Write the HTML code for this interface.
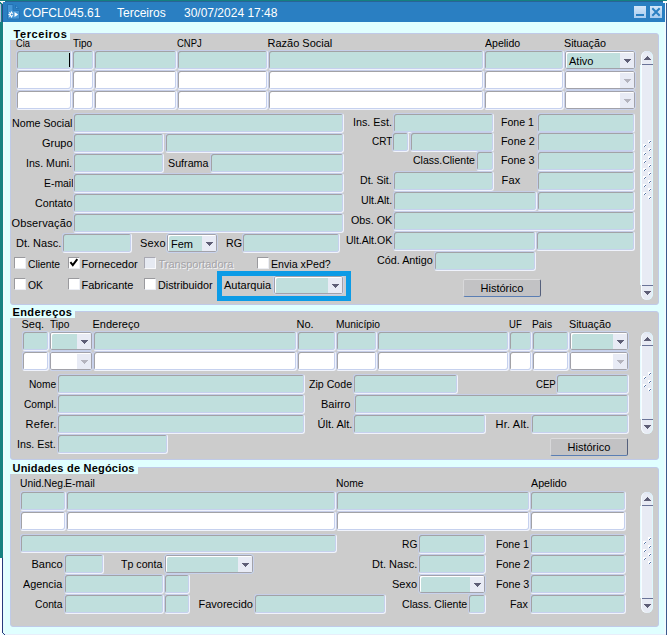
<!DOCTYPE html>
<html><head><meta charset="utf-8"><title>COFCL045.61</title>
<style>
html,body{margin:0;padding:0;}
body{width:667px;height:635px;position:relative;overflow:hidden;background:#e0ffff;font-family:"Liberation Sans",sans-serif;font-size:11px;color:#000;}
div,span{box-sizing:border-box;}
.tt{position:absolute;top:6px;color:#fff;font-size:12px;white-space:pre;line-height:14px;}
.p{position:absolute;background:#cccccc;border-radius:3px;border:1px solid #c0cae8;}
.pt{position:absolute;background:#e0ffff;height:12px;}
.l{position:absolute;transform-origin:0 0;white-space:pre;line-height:14px;font-size:11px;}
.l.bt{font-weight:bold;line-height:13px;}
.l.dis{color:#a4a4a8;text-shadow:1px 1px 0 #f4f4f8;}
.f{position:absolute;height:20px;background:#c0dfdd;border:1px solid;border-color:#c6cee8 #f0f3fc #f0f3fc #c6cee8;border-radius:3px;box-shadow:inset 1px 1px 0 #a2a2a6, inset -1px -1px 0 #c6d1ee;}
.f.w{background:#fff;}
.c{position:absolute;height:20px;background:#c0dfdd;border:1px solid #c8d2ec;border-radius:3px;box-shadow:inset 0 0 0 1px #a2a2aa, inset 2px 2px 0 #fff;}
.c.w{background:#fff;}
.c .ct{position:absolute;left:4px;top:3px;line-height:14px;font-size:11px;}
.c .cb{position:absolute;right:1px;top:2px;bottom:1px;width:14px;background:#e8ebf5;}
.c .cb svg{position:absolute;left:4px;top:6px;fill:#5e5e76;}
.c.dis .cb svg{fill:#b4b4be;}
.cur{position:absolute;width:1px;background:#000;}
.k{position:absolute;width:12px;height:12px;background:#fff;border:1px solid;border-color:#9a9a9e #eceef4 #eceef4 #9a9a9e;border-radius:1px;}
.k svg{position:absolute;left:-1px;top:-1px;}
.k.kd{background:#e6eaf2;border-color:#a8a8b2 #fafafc #fafafc #a8a8b2;}
.b{position:absolute;background:#c2c2c4;border:1px solid;border-color:#dcdcde #55607c #5a7eb4 #d8d8da;border-radius:2px;}
#hl{position:absolute;border:5px solid #0c9be6;}
.sb{position:absolute;background:#e8ebf4;border-radius:6px;box-shadow:inset 1px 0 0 #f6fdff, inset -1px 0 0 #ddf8fc, inset 0 1px 0 #d4dcf0;}
.se{left:-1px;width:1px;background:#e6fbff;}
.sb span,.sb svg{position:absolute;display:block;}
.sl{left:1px;right:0;height:1px;background:#6a7498;}
.gm{width:3px;height:3px;background:#fff;}
.gm i,.gm b{position:absolute;width:1px;height:1px;background:#5878a8;}
.gm i{left:2px;top:1px;}
.gm b{left:1px;top:2px;}
.wb{position:absolute;top:6px;width:12px;height:12px;background:linear-gradient(#d4e6f8,#a8ccf0);}

</style></head>
<body>
<div style="position:absolute;left:0;top:0;width:667px;height:1px;background:#148080"></div>
<div style="position:absolute;left:0;top:1px;width:667px;height:1px;background:#2a6496"></div>
<div style="position:absolute;left:0;top:0;width:3px;height:558px;background:#168282"></div>
<div style="position:absolute;left:0;top:4px;width:1px;height:18px;background:#b4c0e2"></div>
<div style="position:absolute;left:2px;top:2px;width:1px;height:20px;background:#2a4a86"></div>
<div style="position:absolute;left:0;top:1px;width:5px;height:1px;background:#fff"></div>
<div style="position:absolute;left:1px;top:2px;width:3px;height:1px;background:#f0f0f0"></div>
<div style="position:absolute;left:2px;top:3px;width:1px;height:1px;background:#c8c8c8"></div>
<div style="position:absolute;left:3px;top:22px;width:1px;height:536px;background:#f2fbff"></div>
<div style="position:absolute;left:3px;top:2px;width:662px;height:20px;background:#2a7fc2"></div>
<div style="position:absolute;left:665px;top:3px;width:1px;height:631px;background:#f4faff"></div>
<div style="position:absolute;left:666px;top:3px;width:1px;height:632px;background:#3a5a8c"></div>
<div style="position:absolute;left:663px;top:1px;width:4px;height:2px;background:#fff"></div>
<div style="position:absolute;left:0;top:558px;width:2px;height:77px;background:#fff"></div>
<div style="position:absolute;left:2px;top:558px;width:1px;height:75px;background:#2a3a7c"></div>
<div style="position:absolute;left:3px;top:634px;width:663px;height:1px;background:#e8eefa"></div>
<div style="position:absolute;left:3px;top:633px;width:1px;height:1px;background:#2a3a7c"></div><div style="position:absolute;left:4px;top:634px;width:1px;height:1px;background:#2a3a7c"></div>
<div style="position:absolute;left:664px;top:22px;width:1px;height:612px;background:#ebfcff"></div>
<div style="position:absolute;left:4px;top:22px;width:1px;height:612px;background:#ebfcff"></div>
<svg style="position:absolute;left:6px;top:3px" width="16" height="18" viewBox="6 3 16 18">
<path d="M7.5 4.5h5.5v6h6.5v8.5h-12z" fill="#4596d6" stroke="#2572b4" stroke-width="1"/>
<path d="M15.5 5.2v3.3h3.3z" fill="#5aa6e2" stroke="#2572b4" stroke-width="1" stroke-linejoin="round"/>
<g fill="#fff"><circle cx="11.5" cy="14.5" r="2.1"/>
<rect x="11" y="11.4" width="1" height="6.2"/><rect x="8.4" y="14" width="6.2" height="1" />
<rect x="11" y="11.4" width="1" height="6.2" transform="rotate(45 11.5 14.5)"/><rect x="11" y="11.4" width="1" height="6.2" transform="rotate(-45 11.5 14.5)"/></g>
<rect x="13.1" y="10.9" width="3" height="7.4" fill="#4596d6"/>
<circle cx="11.8" cy="14.5" r="1.05" fill="#3a8cd0"/>
<path d="M14.5 11.9v5.2l3.7-2.6z" fill="#fff"/>
</svg>
<div class="wb" style="left:634px"><span style="position:absolute;left:2px;top:8px;width:8px;height:2px;background:#2a7fc2"></span></div>
<div class="wb" style="left:650px"><svg width="12" height="12" viewBox="0 0 12 12" style="position:absolute;left:0;top:0"><path d="M2.3 2.3L9.7 9.7M9.7 2.3L2.3 9.7" stroke="#2a7fc2" stroke-width="2" fill="none"/></svg></div>
<div class="tt" style="left:23px">COFCL045.61</div><div class="tt" style="left:117px">Terceiros</div><div class="tt" style="left:184px">30/07/2024 17:48</div>

<div class="p" style="left:10px;top:33px;width:649px;height:272px"></div>
<div class="pt" style="left:10px;top:28px;width:60px"></div>
<div class="l bt" style="left:13.5px;top:28px;letter-spacing:0.57px">Terceiros</div>
<div class="l " style="left:16px;top:36px;transform:scaleX(0.839)">Cia</div>
<div class="l " style="left:72.5px;top:36px;transform:scaleX(0.912)">Tipo</div>
<div class="l " style="left:177px;top:36px;transform:scaleX(0.858)">CNPJ</div>
<div class="l " style="left:267.5px;top:36px">Razão Social</div>
<div class="l " style="left:484.5px;top:36px;transform:scaleX(0.959)">Apelido</div>
<div class="l " style="left:564px;top:36px;transform:scaleX(0.979)">Situação</div>
<div class="f " style="left:16px;top:50px;width:56px"></div>
<div class="f " style="left:72px;top:50px;width:22px"></div>
<div class="f " style="left:94px;top:50px;width:83px"></div>
<div class="f " style="left:177px;top:50px;width:91px"></div>
<div class="f " style="left:268px;top:50px;width:216px"></div>
<div class="f " style="left:484px;top:50px;width:80px"></div>
<div class="c " style="left:564px;top:50px;width:72px"><span class="ct">Ativo</span><span class="cb"><svg width="7" height="4" viewBox="0 0 7 4" shape-rendering="crispEdges"><path d="M0 0h7v1h-1v1h-1v1h-1v1h-1v-1h-1v-1h-1v-1h-1z"/></svg></span></div>
<div class="f w" style="left:16px;top:70px;width:56px"></div>
<div class="f w" style="left:72px;top:70px;width:22px"></div>
<div class="f w" style="left:94px;top:70px;width:83px"></div>
<div class="f w" style="left:177px;top:70px;width:91px"></div>
<div class="f w" style="left:268px;top:70px;width:216px"></div>
<div class="f w" style="left:484px;top:70px;width:80px"></div>
<div class="c w dis" style="left:564px;top:70px;width:72px"><span class="ct"></span><span class="cb"><svg width="7" height="4" viewBox="0 0 7 4" shape-rendering="crispEdges"><path d="M0 0h7v1h-1v1h-1v1h-1v1h-1v-1h-1v-1h-1v-1h-1z"/></svg></span></div>
<div class="f w" style="left:16px;top:90px;width:56px"></div>
<div class="f w" style="left:72px;top:90px;width:22px"></div>
<div class="f w" style="left:94px;top:90px;width:83px"></div>
<div class="f w" style="left:177px;top:90px;width:91px"></div>
<div class="f w" style="left:268px;top:90px;width:216px"></div>
<div class="f w" style="left:484px;top:90px;width:80px"></div>
<div class="c w dis" style="left:564px;top:90px;width:72px"><span class="ct"></span><span class="cb"><svg width="7" height="4" viewBox="0 0 7 4" shape-rendering="crispEdges"><path d="M0 0h7v1h-1v1h-1v1h-1v1h-1v-1h-1v-1h-1v-1h-1z"/></svg></span></div>
<div class="cur" style="left:69px;top:53px;height:14px"></div>
<div class="sb" style="left:641px;top:51px;width:12px;height:249px"><svg class="sa" style="left:3px;top:5px" width="7" height="4" viewBox="0 0 7 4" shape-rendering="crispEdges"><path d="M3 0h1v1h1v1h1v1h1v1h-7v-1h1v-1h1v-1h1z" fill="#5e5e76"/></svg><svg class="sa" style="left:3px;top:240px" width="7" height="4" viewBox="0 0 7 4" shape-rendering="crispEdges"><path d="M0 0h7v1h-1v1h-1v1h-1v1h-1v-1h-1v-1h-1v-1h-1z" fill="#5e5e76"/></svg><span class="sl" style="top:13px"></span><span class="sl" style="top:234px"></span><span class="se" style="top:14px;height:220px"></span><span class="gm" style="left:7px;top:89px"><i></i><b></b></span><span class="gm" style="left:7px;top:97px"><i></i><b></b></span><span class="gm" style="left:7px;top:105px"><i></i><b></b></span><span class="gm" style="left:7px;top:113px"><i></i><b></b></span><span class="gm" style="left:7px;top:121px"><i></i><b></b></span><span class="gm" style="left:7px;top:129px"><i></i><b></b></span><span class="gm" style="left:7px;top:137px"><i></i><b></b></span><span class="gm" style="left:7px;top:145px"><i></i><b></b></span><span class="gm" style="left:2px;top:93px"><i></i><b></b></span><span class="gm" style="left:2px;top:101px"><i></i><b></b></span><span class="gm" style="left:2px;top:109px"><i></i><b></b></span><span class="gm" style="left:2px;top:117px"><i></i><b></b></span><span class="gm" style="left:2px;top:125px"><i></i><b></b></span><span class="gm" style="left:2px;top:133px"><i></i><b></b></span><span class="gm" style="left:2px;top:141px"><i></i><b></b></span></div>
<div class="l " style="left:12px;top:116px;transform:scaleX(0.969)">Nome Social</div>
<div class="f " style="left:73px;top:113px;width:271px"></div>
<div class="l " style="left:42px;top:136px">Grupo</div>
<div class="f " style="left:73px;top:133px;width:91px"></div>
<div class="f " style="left:165px;top:133px;width:179px"></div>
<div class="l " style="left:26px;top:156px;transform:scaleX(0.965)">Ins. Muni.</div>
<div class="f " style="left:73px;top:153px;width:91px"></div>
<div class="l " style="left:168px;top:156px;transform:scaleX(0.973)">Suframa</div>
<div class="f " style="left:210px;top:153px;width:134px"></div>
<div class="l " style="left:43.5px;top:176px;transform:scaleX(0.946)">E-mail</div>
<div class="f " style="left:73px;top:173px;width:271px"></div>
<div class="l " style="left:35px;top:196px;transform:scaleX(0.971)">Contato</div>
<div class="f " style="left:73px;top:193px;width:271px"></div>
<div class="l " style="left:11.5px;top:216px;letter-spacing:0.14px">Observação</div>
<div class="f " style="left:73px;top:213px;width:271px"></div>
<div class="l " style="left:16px;top:236px">Dt. Nasc.</div>
<div class="f " style="left:62px;top:233px;width:70px"></div>
<div class="l " style="left:140px;top:236px;letter-spacing:0.17px">Sexo</div>
<div class="c " style="left:166px;top:233px;width:52px"><span class="ct">Fem</span><span class="cb"><svg width="7" height="4" viewBox="0 0 7 4" shape-rendering="crispEdges"><path d="M0 0h7v1h-1v1h-1v1h-1v1h-1v-1h-1v-1h-1v-1h-1z"/></svg></span></div>
<div class="l " style="left:225.5px;top:236px;transform:scaleX(0.973)">RG</div>
<div class="f " style="left:242px;top:233px;width:98px"></div>
<div class="k" style="left:14px;top:257px"></div>
<div class="l " style="left:28px;top:257px;transform:scaleX(0.937)">Cliente</div>
<div class="k" style="left:68px;top:257px"><svg width="12" height="12" viewBox="0 0 12 12"><path d="M2.4 5.2 L4.8 8.2 L9.3 2.2" fill="none" stroke="#000" stroke-width="2"/></svg></div>
<div class="l " style="left:81.5px;top:257px">Fornecedor</div>
<div class="k kd" style="left:144px;top:257px"></div>
<div class="l dis" style="left:158.5px;top:257px">Transportadora</div>
<div class="k" style="left:257px;top:257px"></div>
<div class="l " style="left:271px;top:257px;transform:scaleX(0.967)">Envia xPed?</div>
<div class="k" style="left:14px;top:278px"></div>
<div class="l " style="left:28px;top:278px;transform:scaleX(0.942)">OK</div>
<div class="k" style="left:68px;top:278px"></div>
<div class="l " style="left:81.5px;top:278px">Fabricante</div>
<div class="k" style="left:144px;top:278px"></div>
<div class="l " style="left:158px;top:278px;transform:scaleX(0.980)">Distribuidor</div>
<div class="l " style="left:224px;top:278px">Autarquia</div>
<div class="c " style="left:273px;top:275px;width:71px"><span class="ct"></span><span class="cb"><svg width="7" height="4" viewBox="0 0 7 4" shape-rendering="crispEdges"><path d="M0 0h7v1h-1v1h-1v1h-1v1h-1v-1h-1v-1h-1v-1h-1z"/></svg></span></div>
<div id="hl" style="left:217px;top:271px;width:134px;height:30px"></div>
<div class="l " style="left:353px;top:115px;transform:scaleX(0.979)">Ins. Est.</div>
<div class="f " style="left:393px;top:113px;width:101px"></div>
<div class="l " style="left:372px;top:134px;transform:scaleX(0.908)">CRT</div>
<div class="f " style="left:392px;top:132px;width:17px"></div>
<div class="f " style="left:410px;top:132px;width:84px"></div>
<div class="l " style="left:413px;top:153px;transform:scaleX(0.955)">Class.Cliente</div>
<div class="f " style="left:476px;top:151px;width:18px"></div>
<div class="l " style="left:360px;top:173px;transform:scaleX(0.962)">Dt. Sit.</div>
<div class="f " style="left:393px;top:171px;width:101px"></div>
<div class="l " style="left:360.5px;top:193px;transform:scaleX(0.964)">Ult.Alt.</div>
<div class="f " style="left:393px;top:191px;width:144px"></div>
<div class="f " style="left:537px;top:191px;width:98px"></div>
<div class="l " style="left:351px;top:213px;transform:scaleX(0.976)">Obs. OK</div>
<div class="f " style="left:393px;top:211px;width:242px"></div>
<div class="l " style="left:346px;top:233px;transform:scaleX(0.956)">Ult.Alt.OK</div>
<div class="f " style="left:393px;top:231px;width:143px"></div>
<div class="f " style="left:536px;top:231px;width:99px"></div>
<div class="l " style="left:377px;top:253px;transform:scaleX(0.980)">Cód. Antigo</div>
<div class="f " style="left:434px;top:251px;width:102px"></div>
<div class="l " style="left:500.5px;top:115px;transform:scaleX(0.960)">Fone 1</div>
<div class="f " style="left:537px;top:113px;width:98px"></div>
<div class="l " style="left:500.5px;top:134px;transform:scaleX(0.985)">Fone 2</div>
<div class="f " style="left:537px;top:132px;width:98px"></div>
<div class="l " style="left:500.5px;top:153px;transform:scaleX(0.982)">Fone 3</div>
<div class="f " style="left:537px;top:151px;width:98px"></div>
<div class="l " style="left:501.5px;top:173px;letter-spacing:0.2px">Fax</div>
<div class="f " style="left:537px;top:171px;width:98px"></div>
<div class="b" style="left:463px;top:279px;width:78px;height:18px"></div>
<div class="l " style="left:480.5px;top:281px">Histórico</div>
<div class="p" style="left:10px;top:311px;width:649px;height:149px"></div>
<div class="pt" style="left:10px;top:306px;width:65px"></div>
<div class="l bt" style="left:12.5px;top:306px;letter-spacing:0.39px">Endereços</div>
<div class="l " style="left:21.5px;top:317px">Seq.</div>
<div class="l " style="left:49.5px;top:317px;transform:scaleX(0.926)">Tipo</div>
<div class="l " style="left:92.5px;top:317px">Endereço</div>
<div class="l " style="left:296.5px;top:317px">No.</div>
<div class="l " style="left:336px;top:317px;transform:scaleX(0.934)">Município</div>
<div class="l " style="left:509px;top:317px;transform:scaleX(0.866)">UF</div>
<div class="l " style="left:531.5px;top:317px;transform:scaleX(0.936)">Pais</div>
<div class="l " style="left:569px;top:317px;transform:scaleX(0.979)">Situação</div>
<div class="f " style="left:22px;top:331px;width:27px"></div>
<div class="f " style="left:93px;top:331px;width:204px"></div>
<div class="f " style="left:297px;top:331px;width:39px"></div>
<div class="f " style="left:336px;top:331px;width:41px"></div>
<div class="f " style="left:377px;top:331px;width:132px"></div>
<div class="f " style="left:509px;top:331px;width:23px"></div>
<div class="f " style="left:532px;top:331px;width:37px"></div>
<div class="c " style="left:49px;top:331px;width:44px"><span class="ct"></span><span class="cb"><svg width="7" height="4" viewBox="0 0 7 4" shape-rendering="crispEdges"><path d="M0 0h7v1h-1v1h-1v1h-1v1h-1v-1h-1v-1h-1v-1h-1z"/></svg></span></div>
<div class="c " style="left:569px;top:331px;width:60px"><span class="ct"></span><span class="cb"><svg width="7" height="4" viewBox="0 0 7 4" shape-rendering="crispEdges"><path d="M0 0h7v1h-1v1h-1v1h-1v1h-1v-1h-1v-1h-1v-1h-1z"/></svg></span></div>
<div class="f w" style="left:22px;top:351px;width:27px"></div>
<div class="f w" style="left:93px;top:351px;width:204px"></div>
<div class="f w" style="left:297px;top:351px;width:39px"></div>
<div class="f w" style="left:336px;top:351px;width:41px"></div>
<div class="f w" style="left:377px;top:351px;width:132px"></div>
<div class="f w" style="left:509px;top:351px;width:23px"></div>
<div class="f w" style="left:532px;top:351px;width:37px"></div>
<div class="c w dis" style="left:49px;top:351px;width:44px"><span class="ct"></span><span class="cb"><svg width="7" height="4" viewBox="0 0 7 4" shape-rendering="crispEdges"><path d="M0 0h7v1h-1v1h-1v1h-1v1h-1v-1h-1v-1h-1v-1h-1z"/></svg></span></div>
<div class="c w dis" style="left:569px;top:351px;width:60px"><span class="ct"></span><span class="cb"><svg width="7" height="4" viewBox="0 0 7 4" shape-rendering="crispEdges"><path d="M0 0h7v1h-1v1h-1v1h-1v1h-1v-1h-1v-1h-1v-1h-1z"/></svg></span></div>
<div class="sb" style="left:641px;top:332px;width:12px;height:102px"><svg class="sa" style="left:3px;top:5px" width="7" height="4" viewBox="0 0 7 4" shape-rendering="crispEdges"><path d="M3 0h1v1h1v1h1v1h1v1h-7v-1h1v-1h1v-1h1z" fill="#5e5e76"/></svg><svg class="sa" style="left:3px;top:93px" width="7" height="4" viewBox="0 0 7 4" shape-rendering="crispEdges"><path d="M0 0h7v1h-1v1h-1v1h-1v1h-1v-1h-1v-1h-1v-1h-1z" fill="#5e5e76"/></svg><span class="sl" style="top:13px"></span><span class="sl" style="top:87px"></span><span class="se" style="top:14px;height:73px"></span><span class="gm" style="left:7px;top:40px"><i></i><b></b></span><span class="gm" style="left:7px;top:48px"><i></i><b></b></span><span class="gm" style="left:7px;top:56px"><i></i><b></b></span><span class="gm" style="left:2px;top:44px"><i></i><b></b></span><span class="gm" style="left:2px;top:52px"><i></i><b></b></span></div>
<div class="l " style="left:28.5px;top:377px;transform:scaleX(0.925)">Nome</div>
<div class="f " style="left:57px;top:374px;width:248px"></div>
<div class="l " style="left:24px;top:397px;transform:scaleX(0.928)">Compl.</div>
<div class="f " style="left:57px;top:394px;width:248px"></div>
<div class="l " style="left:25.5px;top:417px;letter-spacing:0.3px">Refer.</div>
<div class="f " style="left:57px;top:414px;width:248px"></div>
<div class="l " style="left:17px;top:437px;transform:scaleX(0.974)">Ins. Est.</div>
<div class="f " style="left:57px;top:434px;width:111px"></div>
<div class="l " style="left:309px;top:377px;transform:scaleX(0.964)">Zip Code</div>
<div class="f " style="left:353px;top:374px;width:105px"></div>
<div class="l " style="left:321px;top:397px">Bairro</div>
<div class="f " style="left:354px;top:394px;width:275px"></div>
<div class="l " style="left:317.5px;top:417px">Últ. Alt.</div>
<div class="f " style="left:353px;top:414px;width:133px"></div>
<div class="l " style="left:536px;top:377px;transform:scaleX(0.875)">CEP</div>
<div class="f " style="left:556px;top:374px;width:73px"></div>
<div class="l " style="left:495.5px;top:417px;letter-spacing:0.21px">Hr. Alt.</div>
<div class="f " style="left:531px;top:414px;width:98px"></div>
<div class="b" style="left:550px;top:438px;width:78px;height:18px"></div>
<div class="l " style="left:567.5px;top:440px">Histórico</div>
<div class="p" style="left:10px;top:467px;width:649px;height:160px"></div>
<div class="pt" style="left:10px;top:462px;width:128px"></div>
<div class="l bt" style="left:12.5px;top:462px;letter-spacing:0.21px">Unidades de Negócios</div>
<div class="l " style="left:19.5px;top:476px;transform:scaleX(0.936)">Unid.Neg.</div>
<div class="l " style="left:65px;top:476px;transform:scaleX(0.959)">E-mail</div>
<div class="l " style="left:336px;top:476px;transform:scaleX(0.936)">Nome</div>
<div class="l " style="left:530.5px;top:476px;transform:scaleX(0.972)">Apelido</div>
<div class="f " style="left:20px;top:491px;width:46px"></div>
<div class="f " style="left:66px;top:491px;width:270px"></div>
<div class="f " style="left:336px;top:491px;width:194px"></div>
<div class="f " style="left:530px;top:491px;width:96px"></div>
<div class="f w" style="left:20px;top:511px;width:46px"></div>
<div class="f w" style="left:66px;top:511px;width:270px"></div>
<div class="f w" style="left:336px;top:511px;width:194px"></div>
<div class="f w" style="left:530px;top:511px;width:96px"></div>
<div class="f " style="left:20px;top:534px;width:317px;height:19px"></div>
<div class="sb" style="left:641px;top:492px;width:12px;height:121px"><svg class="sa" style="left:3px;top:5px" width="7" height="4" viewBox="0 0 7 4" shape-rendering="crispEdges"><path d="M3 0h1v1h1v1h1v1h1v1h-7v-1h1v-1h1v-1h1z" fill="#5e5e76"/></svg><svg class="sa" style="left:3px;top:112px" width="7" height="4" viewBox="0 0 7 4" shape-rendering="crispEdges"><path d="M0 0h7v1h-1v1h-1v1h-1v1h-1v-1h-1v-1h-1v-1h-1z" fill="#5e5e76"/></svg><span class="sl" style="top:13px"></span><span class="sl" style="top:106px"></span><span class="se" style="top:14px;height:92px"></span><span class="gm" style="left:7px;top:45px"><i></i><b></b></span><span class="gm" style="left:7px;top:53px"><i></i><b></b></span><span class="gm" style="left:7px;top:61px"><i></i><b></b></span><span class="gm" style="left:7px;top:69px"><i></i><b></b></span><span class="gm" style="left:2px;top:49px"><i></i><b></b></span><span class="gm" style="left:2px;top:57px"><i></i><b></b></span><span class="gm" style="left:2px;top:65px"><i></i><b></b></span></div>
<div class="l " style="left:31.5px;top:557px">Banco</div>
<div class="f " style="left:64px;top:554px;width:40px"></div>
<div class="l " style="left:121px;top:557px;transform:scaleX(0.965)">Tp conta</div>
<div class="c " style="left:164px;top:554px;width:90px"><span class="ct"></span><span class="cb"><svg width="7" height="4" viewBox="0 0 7 4" shape-rendering="crispEdges"><path d="M0 0h7v1h-1v1h-1v1h-1v1h-1v-1h-1v-1h-1v-1h-1z"/></svg></span></div>
<div class="l " style="left:23px;top:577px;transform:scaleX(0.985)">Agencia</div>
<div class="f " style="left:64px;top:574px;width:100px"></div>
<div class="f " style="left:164px;top:574px;width:26px"></div>
<div class="l " style="left:35px;top:597px;transform:scaleX(0.934)">Conta</div>
<div class="f " style="left:64px;top:594px;width:100px"></div>
<div class="f " style="left:164px;top:594px;width:26px"></div>
<div class="l " style="left:198.5px;top:597px">Favorecido</div>
<div class="f " style="left:254px;top:594px;width:132px"></div>
<div class="l " style="left:402px;top:537px;transform:scaleX(0.932)">RG</div>
<div class="f " style="left:418px;top:534px;width:68px"></div>
<div class="l " style="left:372px;top:557px">Dt. Nasc.</div>
<div class="f " style="left:418px;top:554px;width:68px"></div>
<div class="l " style="left:392px;top:577px">Sexo</div>
<div class="c " style="left:418px;top:574px;width:68px"><span class="ct"></span><span class="cb"><svg width="7" height="4" viewBox="0 0 7 4" shape-rendering="crispEdges"><path d="M0 0h7v1h-1v1h-1v1h-1v1h-1v-1h-1v-1h-1v-1h-1z"/></svg></span></div>
<div class="l " style="left:401.5px;top:597px;transform:scaleX(0.961)">Class. Cliente</div>
<div class="f " style="left:468px;top:594px;width:18px"></div>
<div class="l " style="left:495.5px;top:537px;transform:scaleX(0.960)">Fone 1</div>
<div class="f " style="left:530px;top:534px;width:96px"></div>
<div class="l " style="left:495.5px;top:557px;transform:scaleX(0.976)">Fone 2</div>
<div class="f " style="left:530px;top:554px;width:96px"></div>
<div class="l " style="left:495.5px;top:577px;transform:scaleX(0.973)">Fone 3</div>
<div class="f " style="left:530px;top:574px;width:96px"></div>
<div class="l " style="left:510px;top:597px;transform:scaleX(0.977)">Fax</div>
<div class="f " style="left:530px;top:594px;width:96px"></div>
</body></html>
